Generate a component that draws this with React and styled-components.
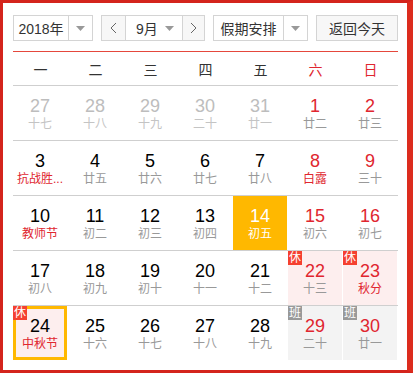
import React from 'react';
import styled, { createGlobalStyle } from 'styled-components';

const GlobalStyle = createGlobalStyle`
  body {
    margin: 0;
    background: #fff;
    font-family: "Liberation Sans", Arial, "Noto Sans CJK SC", sans-serif;
  }
`;

const WEEK = ['一', '二', '三', '四', '五', '六', '日'];

// n: day, l: lunar text, o: other month, r: red number, lr: red lunar,
// b: badge ('休' | '班'), t: today, s: selected
const WEEKS = [
  [
    { n: 27, l: '十七', o: true }, { n: 28, l: '十八', o: true }, { n: 29, l: '十九', o: true },
    { n: 30, l: '二十', o: true }, { n: 31, l: '廿一', o: true },
    { n: 1, l: '廿二', r: true }, { n: 2, l: '廿三', r: true },
  ],
  [
    { n: 3, l: '抗战胜...', lr: true }, { n: 4, l: '廿五' }, { n: 5, l: '廿六' },
    { n: 6, l: '廿七' }, { n: 7, l: '廿八' },
    { n: 8, l: '白露', r: true, lr: true }, { n: 9, l: '三十', r: true },
  ],
  [
    { n: 10, l: '教师节', lr: true }, { n: 11, l: '初二' }, { n: 12, l: '初三' },
    { n: 13, l: '初四' }, { n: 14, l: '初五', t: true },
    { n: 15, l: '初六', r: true }, { n: 16, l: '初七', r: true },
  ],
  [
    { n: 17, l: '初八' }, { n: 18, l: '初九' }, { n: 19, l: '初十' },
    { n: 20, l: '十一' }, { n: 21, l: '十二' },
    { n: 22, l: '十三', r: true, b: '休' }, { n: 23, l: '秋分', r: true, lr: true, b: '休' },
  ],
  [
    { n: 24, l: '中秋节', lr: true, b: '休', s: true }, { n: 25, l: '十六' }, { n: 26, l: '十七' },
    { n: 27, l: '十八' }, { n: 28, l: '十九' },
    { n: 29, l: '二十', r: true, b: '班' }, { n: 30, l: '廿一', r: true, b: '班' },
  ],
];

const Arrow = () => (
  <svg width="9" height="5" viewBox="0 0 9 5">
    <path d="M0 0 L9 0 L4.5 5 Z" fill="#999" />
  </svg>
);

const Chevron = ({ dir }) => (
  <svg width="7" height="12" viewBox="0 0 7 12">
    <polyline
      points={dir === 'left' ? '6,1 1,6 6,11' : '1,1 6,6 1,11'}
      fill="none"
      stroke="#666"
      strokeWidth="1"
    />
  </svg>
);

function App() {
  return (
    <>
      <GlobalStyle />
      <Frame>
        <Toolbar>
          <Select width={80}>
            <SelectText>2018年</SelectText>
            <ArrowBox><Arrow /></ArrowBox>
          </Select>
          <Select width={104}>
            <NavButton width={23}><Chevron dir="left" /></NavButton>
            <MonthText>9月</MonthText>
            <MonthArrow><Arrow /></MonthArrow>
            <NavButton width={21} right><Chevron dir="right" /></NavButton>
          </Select>
          <Select width={95}>
            <SelectText>假期安排</SelectText>
            <ArrowBox><Arrow /></ArrowBox>
          </Select>
          <TodayButton>返回今天</TodayButton>
        </Toolbar>

        <Header>
          {WEEK.map((w, i) => (
            <WeekDay key={w} red={i >= 5}>{w}</WeekDay>
          ))}
        </Header>

        {WEEKS.map((week, wi) => (
          <WeekRow key={wi}>
            {week.map((d, di) => {
              let bg = 'transparent';
              if (d.t) bg = '#ffb800';
              else if (d.b === '休') bg = '#fdeeee';
              else if (d.b === '班') bg = '#f3f3f3';
              return (
                <Cell key={di} bg={bg} selected={d.s}>
                  {d.b && <Badge rest={d.b === '休'} selected={d.s}>{d.b}</Badge>}
                  <DayNum other={d.o} red={d.r} today={d.t}>{d.n}</DayNum>
                  <Lunar other={d.o} red={d.lr} today={d.t}>{d.l}</Lunar>
                </Cell>
              );
            })}
          </WeekRow>
        ))}
      </Frame>
    </>
  );
}

const Frame = styled.div`
  box-sizing: border-box;
  width: 413px;
  height: 373px;
  border: 3px solid #d4241c;
  border-right: 6px solid #dc2c1e;
  padding: 12px 9px 0 10px;
  background: #fff;
`;

const Toolbar = styled.div`
  display: flex;
  justify-content: space-between;
  height: 26px;
  margin-bottom: 10px;
`;

const Select = styled.div`
  box-sizing: border-box;
  display: flex;
  width: ${p => p.width}px;
  height: 26px;
  border: 1px solid #d4d4d4;
  background: #fff;
`;

const SelectText = styled.div`
  flex: 1;
  display: flex;
  align-items: center;
  justify-content: center;
  font-size: 14px;
  color: #333;
`;

const ArrowBox = styled.div`
  width: 23px;
  display: flex;
  align-items: center;
  justify-content: center;
  border-left: 1px solid #d4d4d4;
`;

const NavButton = styled.div`
  width: ${p => p.width}px;
  display: flex;
  align-items: center;
  justify-content: center;
  background: #f7f7f7;
  ${p => (p.right ? 'border-left' : 'border-right')}: 1px solid #d4d4d4;
`;

const MonthText = styled.div`
  flex: 1;
  display: flex;
  align-items: center;
  padding-left: 10px;
  font-size: 14px;
  color: #333;
`;

const MonthArrow = styled.div`
  display: flex;
  align-items: center;
  padding-right: 8px;
`;

const TodayButton = styled.div`
  box-sizing: border-box;
  width: 82px;
  height: 26px;
  display: flex;
  align-items: center;
  justify-content: center;
  border: 1px solid #d4d4d4;
  background: #f7f7f7;
  font-size: 14px;
  color: #333;
`;

const Header = styled.div`
  display: grid;
  grid-template-columns: repeat(7, 55px);
  height: 33px;
  border-top: 1px solid #e5483c;
`;

const WeekDay = styled.div`
  display: flex;
  align-items: center;
  justify-content: center;
  font-size: 14px;
  color: ${p => (p.red ? '#e0262f' : '#333')};
`;

const WeekRow = styled.div`
  display: grid;
  grid-template-columns: repeat(7, 55px);
  border-top: 1px solid #cfcfcf;
`;

const Cell = styled.div`
  position: relative;
  box-sizing: border-box;
  width: 54px;
  height: 54px;
  padding-top: ${p => (p.selected ? 7 : 10)}px;
  display: flex;
  flex-direction: column;
  align-items: center;
  background: ${p => (p.selected ? '#fdeeee' : p.bg)};
  border: ${p => (p.selected ? '3px solid #ffb800' : 'none')};
`;

const Badge = styled.span`
  position: absolute;
  top: ${p => (p.selected ? -3 : 0)}px;
  left: ${p => (p.selected ? -3 : 0)}px;
  width: 14px;
  height: 14px;
  display: flex;
  align-items: center;
  justify-content: center;
  font-size: 12px;
  line-height: 14px;
  color: #fff;
  background: ${p => (p.rest ? '#f5402f' : '#999')};
`;

const DayNum = styled.div`
  font-size: 18px;
  line-height: 20px;
  color: ${p => (p.today ? '#fff' : p.other ? '#bdbdbd' : p.red ? '#e0262f' : '#000')};
`;

const Lunar = styled.div`
  font-size: 12px;
  line-height: 16px;
  white-space: nowrap;
  color: ${p => (p.today ? '#fff' : p.red ? '#e0262f' : p.other ? '#c4c4c4' : '#999')};
`;

export default App;
